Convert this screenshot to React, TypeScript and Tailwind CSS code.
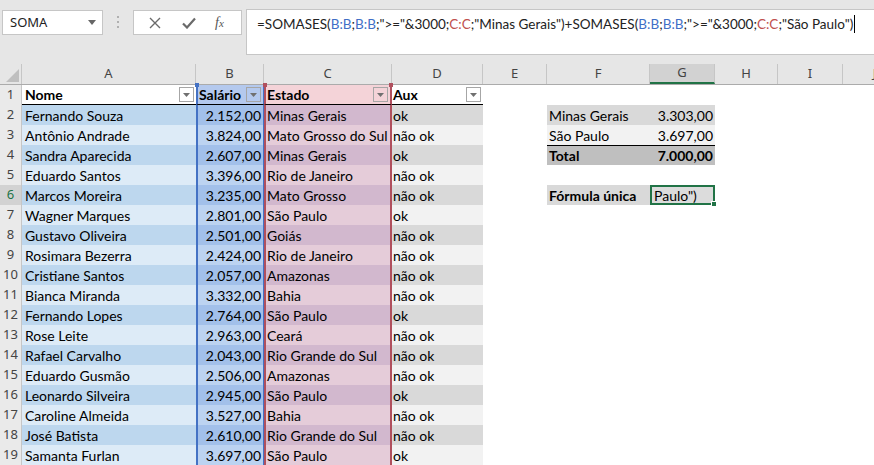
import React from 'react';

const rows: [string, string, string, string][] = [
  ['Fernando Souza', '2.152,00', 'Minas Gerais', 'ok'],
  ['Antônio Andrade', '3.824,00', 'Mato Grosso do Sul', 'não ok'],
  ['Sandra Aparecida', '2.607,00', 'Minas Gerais', 'ok'],
  ['Eduardo Santos', '3.396,00', 'Rio de Janeiro', 'não ok'],
  ['Marcos Moreira', '3.235,00', 'Mato Grosso', 'não ok'],
  ['Wagner Marques', '2.801,00', 'São Paulo', 'ok'],
  ['Gustavo Oliveira', '2.501,00', 'Goiás', 'não ok'],
  ['Rosimara Bezerra', '2.424,00', 'Rio de Janeiro', 'não ok'],
  ['Cristiane Santos', '2.057,00', 'Amazonas', 'não ok'],
  ['Bianca Miranda', '3.332,00', 'Bahia', 'não ok'],
  ['Fernando Lopes', '2.764,00', 'São Paulo', 'ok'],
  ['Rose Leite', '2.963,00', 'Ceará', 'não ok'],
  ['Rafael Carvalho', '2.043,00', 'Rio Grande do Sul', 'não ok'],
  ['Eduardo Gusmão', '2.506,00', 'Amazonas', 'não ok'],
  ['Leonardo Silveira', '2.945,00', 'São Paulo', 'ok'],
  ['Caroline Almeida', '3.527,00', 'Bahia', 'não ok'],
  ['José Batista', '2.610,00', 'Rio Grande do Sul', 'não ok'],
  ['Samanta Furlan', '3.697,00', 'São Paulo', 'ok'],
];

const FilterButton = ({ tint }: { tint?: string }) => (
  <div className={`ml-auto mr-[2px] flex h-[15px] w-[15px] shrink-0 items-center justify-center border border-[#a6a6a6] ${tint ?? 'bg-white'}`}>
    <svg width="7" height="4" viewBox="0 0 7 4">
      <path d="M0 0h7L3.5 4z" fill="#707070" />
    </svg>
  </div>
);

const RowHead = ({ n, active }: { n: number; active?: boolean }) => (
  <div
    className={`flex w-[22px] shrink-0 items-center justify-center border-r border-[#c6c6c6] font-['Noto_Sans',sans-serif] text-[13px] ${
      active ? 'bg-[#d2d2d2] text-[#217346]' : 'bg-[#eaeaea] text-[#444]'
    }`}
  >
    {n}
  </div>
);

const Ref = ({ c, children }: { c: 'b' | 'c'; children: React.ReactNode }) => (
  <span className={c === 'b' ? 'text-[#3f6fc6]' : 'text-[#c0504d]'}>{children}</span>
);

export default function App() {
  const cols = ['A', 'B', 'C', 'D', 'E', 'F', 'G', 'H', 'I', 'J'];
  const widths = ['w-[174px]', 'w-[68px]', 'w-[128px]', 'w-[91px]', 'w-[64px]', 'w-[103px]', 'w-[65px]', 'w-[63px]', 'w-[65px]', 'w-[64px]'];

  const summary: Record<number, { f: string; g: string; cls: string }> = {
    2: { f: 'Minas Gerais', g: '3.303,00', cls: 'bg-[#d9d9d9]' },
    3: { f: 'São Paulo', g: '3.697,00', cls: 'bg-[#f2f2f2]' },
    4: { f: 'Total', g: '7.000,00', cls: 'bg-[#bfbfbf] font-bold border-t border-black' },
  };

  return (
    <div className="h-[465px] w-[874px] overflow-hidden whitespace-nowrap bg-white font-['Lato',sans-serif] text-[14px] text-black">
      {/* Formula bar */}
      <div className="flex h-[64px] items-start bg-[#e6e6e6] pl-[2px] pt-[9px] font-['Noto_Sans',sans-serif]">
        <div className="mt-px flex h-[25px] w-[101px] shrink-0 items-center border border-[#c6c6c6] bg-white pl-[7px] pr-[6px] text-[13px] text-[#222]">
          SOMA
          <svg className="ml-auto" width="8" height="5" viewBox="0 0 8 5">
            <path d="M0 0h8L4 5z" fill="#666" />
          </svg>
        </div>
        <div className="ml-[14px] mt-[7px] flex shrink-0 flex-col gap-[3px]">
          <div className="h-[2px] w-[2px] bg-[#b0b0b0]" />
          <div className="h-[2px] w-[2px] bg-[#b0b0b0]" />
          <div className="h-[2px] w-[2px] bg-[#b0b0b0]" />
        </div>
        <div className="ml-[14px] mt-px flex h-[25px] w-[109px] shrink-0 items-center border border-[#c6c6c6] bg-white">
          <svg className="ml-[15px]" width="12" height="12" viewBox="0 0 12 12">
            <path d="M1 1l10 10M11 1L1 11" stroke="#6a6a6a" strokeWidth="1.4" />
          </svg>
          <svg className="ml-[21px]" width="14" height="12" viewBox="0 0 14 12">
            <path d="M1 6.5l4 4L13 1.5" stroke="#6a6a6a" strokeWidth="2.2" fill="none" />
          </svg>
          <span className="ml-[19px] font-['Liberation_Serif',serif] text-[14px] italic text-[#555]">
            f<span className="text-[11px]">x</span>
          </span>
        </div>
        <div className="ml-[4px] flex h-[46px] min-w-0 flex-1 items-start overflow-hidden border border-r-0 border-[#c6c6c6] bg-white pl-[10px] pt-[4px] font-['Lato',sans-serif] text-[13.5px] text-[#222]">
          <span className="whitespace-pre">
            =SOMASES(<Ref c="b">B:B</Ref>;<Ref c="b">B:B</Ref>;"&gt;="&amp;3000;<Ref c="c">C:C</Ref>;"Minas Gerais")+SOMASES(
            <Ref c="b">B:B</Ref>;<Ref c="b">B:B</Ref>;"&gt;="&amp;3000;<Ref c="c">C:C</Ref>;"São Paulo")
          </span>
          <span className="ml-px mt-[1px] h-[18px] w-px shrink-0 bg-black" />
        </div>
      </div>

      {/* Column headers */}
      <div className="flex h-[21px] border-b border-[#ababab] bg-[#e6e6e6] font-['Noto_Sans',sans-serif] text-[13px] text-[#444]">
        <div className="relative w-[22px] shrink-0 border-r border-[#c6c6c6]">
          <svg className="absolute bottom-[2px] right-[2px]" width="13" height="13" viewBox="0 0 13 13">
            <path d="M13 0v13H0z" fill="#bfbfbf" />
          </svg>
        </div>
        {cols.map((c, i) => (
          <div
            key={c}
            className={`flex shrink-0 items-center justify-center border-r border-[#c6c6c6] ${widths[i]} ${
              c === 'G' ? 'border-b-2 border-b-[#217346] bg-[#d2d2d2]' : ''
            }`}
          >
            {c}
          </div>
        ))}
      </div>

      {/* Header row 1 */}
      <div className="flex h-5">
        <RowHead n={1} />
        <div className="flex w-[174px] shrink-0 items-center border-b border-black pl-[3px] font-bold">
          Nome
          <FilterButton />
        </div>
        <div className="relative flex w-[68px] shrink-0 items-center border-b border-l-2 border-r border-b-black border-l-[#4472c4] border-r-[#4472c4] bg-[#b4c9ee] pl-[1px] font-bold">
          <div className="absolute -left-[3px] -top-[2px] h-[4px] w-[4px] bg-[#4472c4]" />
          Salário
          <FilterButton tint="bg-[#b4c9ee]" />
        </div>
        <div className="relative flex w-[128px] shrink-0 items-center border-b border-l-2 border-r-2 border-b-black border-l-[#b0505e] border-r-[#b0505e] bg-[#f4d3d8] pl-[1px] font-bold">
          <div className="absolute -left-[3px] -top-[2px] h-[4px] w-[4px] bg-[#b0505e]" />
          <div className="absolute -right-[3px] -top-[2px] h-[4px] w-[4px] bg-[#b0505e]" />
          Estado
          <FilterButton tint="bg-[#f4d3d8]" />
        </div>
        <div className="flex w-[91px] shrink-0 items-center border-b border-black pl-[1px] font-bold">
          Aux
          <FilterButton />
        </div>
      </div>

      {/* Data rows */}
      {rows.map(([nome, sal, est, aux], i) => {
        const r = i + 2;
        const dark = r % 2 === 0;
        const s = summary[r];
        return (
          <div key={r} className="flex h-5">
            <RowHead n={r} active={r === 6} />
            <div className={`flex w-[174px] shrink-0 items-center pl-[3px] ${dark ? 'bg-[#bdd7ee]' : 'bg-[#ddebf7]'}`}>{nome}</div>
            <div
              className={`flex w-[68px] shrink-0 items-center justify-end border-l-2 border-r border-[#4472c4] pr-[2px] ${
                dark ? 'bg-[#a2c0ea]' : 'bg-[#bcd3f1]'
              }`}
            >
              {sal}
            </div>
            <div
              className={`flex w-[128px] shrink-0 items-center border-x-2 border-[#b0505e] pl-[1px] ${
                dark ? 'bg-[#d2b8ce]' : 'bg-[#e5ccd9]'
              }`}
            >
              {est}
            </div>
            <div className={`flex w-[91px] shrink-0 items-center pl-[1px] ${dark ? 'bg-[#d9d9d9]' : 'bg-[#f2f2f2]'}`}>{aux}</div>
            <div className="w-[64px] shrink-0" />
            {s ? (
              <>
                <div className={`flex w-[103px] shrink-0 items-center pl-[2px] ${s.cls}`}>{s.f}</div>
                <div className={`flex w-[65px] shrink-0 items-center justify-end pr-[2px] ${s.cls}`}>{s.g}</div>
              </>
            ) : r === 6 ? (
              <>
                <div className="flex w-[103px] shrink-0 items-center bg-[#d9d9d9] pl-[2px] font-bold">Fórmula única</div>
                <div className="relative flex w-[65px] shrink-0 items-center border-2 border-[#217346] bg-[#dcdcdc] pl-[2px]">
                  Paulo")
                  <div className="absolute -bottom-[4px] -right-[4px] h-[6px] w-[6px] border border-white bg-[#217346]" />
                </div>
              </>
            ) : (
              <>
                <div className="w-[103px] shrink-0" />
                <div className="w-[65px] shrink-0" />
              </>
            )}
          </div>
        );
      })}
    </div>
  );
}
